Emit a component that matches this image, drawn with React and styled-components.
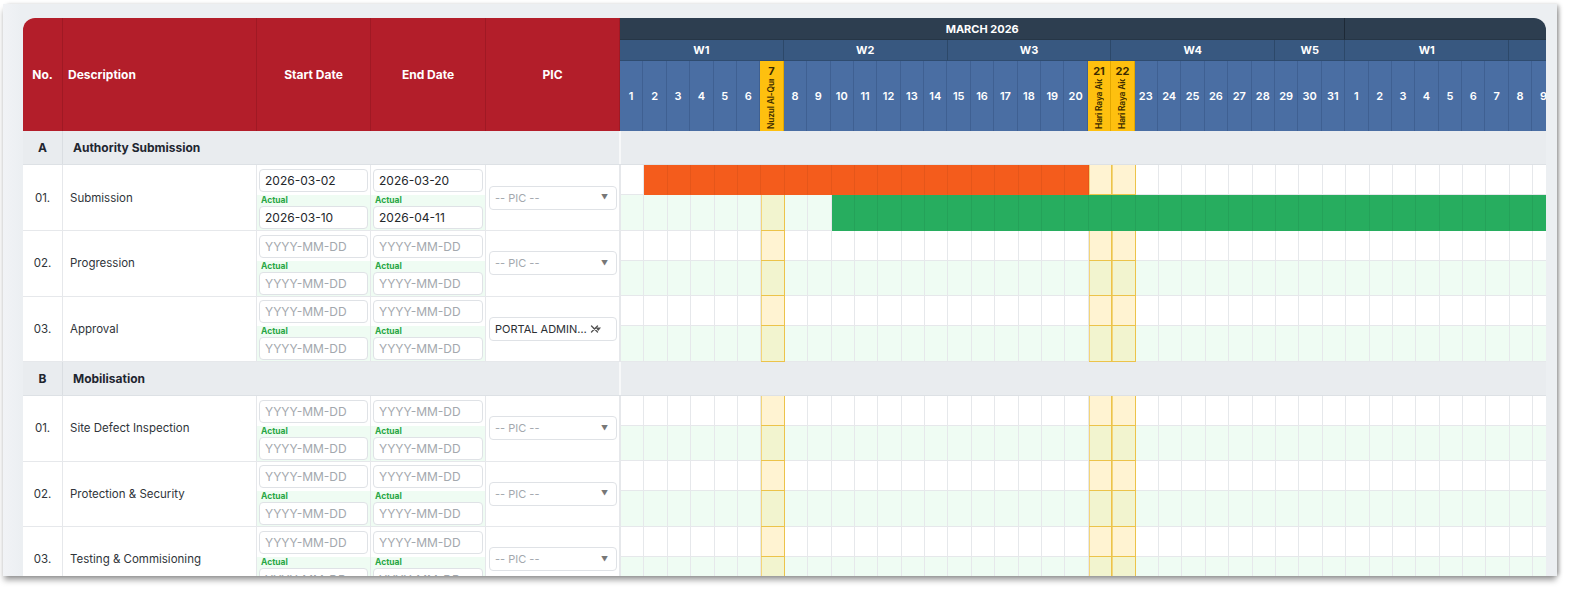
import React from 'react';
import styled, { createGlobalStyle, css } from 'styled-components';

const GlobalStyle = createGlobalStyle`
  html, body { margin: 0; padding: 0; background: #ffffff; }
  body { font-family: Inter, "Noto Sans", sans-serif; color: #2b2f33; }
  * { box-sizing: border-box; }
`;

const DAY_W = 23.4;
const COLS = '40px 194px 114px 115px 134px 1fr';

const HOLIDAYS = {
  '3-7': 'Nuzul Al-Quran',
  '3-21': 'Hari Raya Aidilfitri',
  '3-22': 'Hari Raya Aidilfitri',
};

const MONTHS = [
  { m: 3, name: 'MARCH 2026', days: 31 },
  { m: 4, name: 'APRIL 2026', days: 30 },
];

const DAYS = [];
MONTHS.forEach((mo) => {
  for (let d = 1; d <= mo.days; d++) {
    DAYS.push({ m: mo.m, d, holiday: HOLIDAYS[`${mo.m}-${d}`] });
  }
});

const weeksOf = (days) => {
  const out = [];
  for (let s = 1, w = 1; s <= days; s += 7, w++) {
    out.push({ label: `W${w}`, count: Math.min(7, days - s + 1) });
  }
  return out;
};

const idx = (m, d) => (m === 3 ? d - 1 : 31 + d - 1);

const SECTIONS = [
  {
    key: 'A',
    title: 'Authority Submission',
    tasks: [
      {
        no: '01.', name: 'Submission',
        plan: ['2026-03-02', '2026-03-20'], actual: ['2026-03-10', '2026-04-11'],
        planRange: [idx(3, 2), idx(3, 20)], actualRange: [idx(3, 10), idx(4, 11)],
      },
      { no: '02.', name: 'Progression' },
      { no: '03.', name: 'Approval', pic: 'PORTAL ADMINISTRATOR' },
    ],
  },
  {
    key: 'B',
    title: 'Mobilisation',
    tasks: [
      { no: '01.', name: 'Site Defect Inspection' },
      { no: '02.', name: 'Protection & Security' },
      { no: '03.', name: 'Testing & Commisioning' },
    ],
  },
];

/* ---------- frame ---------- */
const Page = styled.div`
  padding: 4px 15px 14px 3px;
`;

const Card = styled.div`
  height: 572px;
  background: linear-gradient(90deg, #f1f3f6 0px, #eceff2 18px);
  padding: 14px 11px 0 20px;
  overflow: hidden;
  box-shadow: 0 5px 6px -1px rgba(0, 0, 0, 0.38), 3px 0 4px -1px rgba(0, 0, 0, 0.3);
`;

const Sheet = styled.div`
  height: 100%;
  background: #fff;
  border-radius: 12px 12px 0 0;
  overflow: hidden;
`;

/* ---------- header ---------- */
const HeaderGrid = styled.div`
  display: grid;
  grid-template-columns: ${COLS};
  height: 113px;
`;

const HeadCell = styled.div`
  background: #b31e2a;
  color: #fff;
  font-weight: 700;
  font-size: 12px;
  display: flex;
  align-items: center;
  justify-content: ${(p) => (p.$left ? 'flex-start' : 'center')};
  padding-left: ${(p) => (p.$left ? '5px' : '0')};
  border-right: 1px solid #a01924;
`;

const Timeline = styled.div`
  overflow: hidden;
  display: flex;
  flex-direction: column;
  min-width: 0;
`;

const Band = styled.div`
  display: flex;
  flex-shrink: 0;
  height: ${(p) => p.$h}px;
`;

const MonthCell = styled.div`
  flex-shrink: 0;
  background: #2d3e50;
  color: #fff;
  font-size: 11px;
  font-weight: 700;
  display: flex;
  align-items: center;
  justify-content: center;
  border-right: 1px solid #1d2936;
  border-bottom: 1px solid #263646;
`;

const WeekCell = styled.div`
  flex-shrink: 0;
  background: #385880;
  color: #fff;
  font-size: 11px;
  font-weight: 700;
  display: flex;
  align-items: center;
  justify-content: center;
  border-right: 1px solid #2c4869;
  border-bottom: 1px solid #2f4c70;
`;

const DayHead = styled.div`
  flex-shrink: 0;
  width: ${DAY_W}px;
  background: #4a6ea3;
  color: #fff;
  font-size: 11px;
  font-weight: 600;
  display: flex;
  align-items: center;
  justify-content: center;
  border-right: 1px solid #3f6092;
  ${(p) =>
    p.$holiday &&
    css`
      background: #fec00f;
      color: #3a2a00;
      flex-direction: column;
      justify-content: flex-start;
      padding-top: 4px;
      border-right: 1px solid #e3a800;
    `}
`;

const HolidayNum = styled.div`
  font-size: 11px;
  font-weight: 700;
  line-height: 13px;
`;

const HolidayName = styled.div`
  writing-mode: vertical-rl;
  transform: rotate(180deg);
  height: 50px;
  margin-top: 1px;
  overflow: hidden;
  white-space: nowrap;
  font-size: 8.5px;
  font-weight: 600;
  letter-spacing: -0.2px;
  line-height: 11px;
`;

/* ---------- body ---------- */
const SectionRow = styled.div`
  display: grid;
  grid-template-columns: ${COLS};
  height: 34px;
  background: #e9ecef;
  border-bottom: 1px solid #dde1e5;
`;

const SectionKey = styled.div`
  display: flex;
  align-items: center;
  justify-content: center;
  font-size: 12px;
  font-weight: 700;
  color: #1f2630;
  border-right: 1px solid #dadee2;
`;

const SectionTitle = styled.div`
  grid-column: 2 / 6;
  display: flex;
  align-items: center;
  padding-left: 10px;
  font-size: 12px;
  font-weight: 700;
  color: #1f2630;
  border-right: 1px solid #f7f8f9;
`;

const TaskRow = styled.div`
  display: grid;
  grid-template-columns: ${COLS};
  height: 65.5px;
`;

const BodyCell = styled.div`
  border-right: 1px solid #e6e8eb;
  border-bottom: 1px solid #e6e8eb;
  display: flex;
  align-items: center;
  font-size: 11.5px;
  color: #30353a;
  justify-content: ${(p) => (p.$center ? 'center' : 'flex-start')};
  padding-left: ${(p) => (p.$center ? '0' : '7px')};
`;

const DateCell = styled.div`
  display: flex;
  flex-direction: column;
  border-right: 1px solid #e6e8eb;
  border-bottom: 1px solid #e6e8eb;
`;

const PlanPart = styled.div`
  height: 30px;
  padding: 4px 2px 0 2px;
`;

const ActualPart = styled.div`
  flex: 1;
  background: #effcf3;
  padding: 0 2px 1px 2px;
  display: flex;
  flex-direction: column;
`;

const ActualLabel = styled.div`
  font-size: 8.5px;
  font-weight: 700;
  color: #28a745;
  line-height: 11px;
  padding-left: 2px;
`;

const DateBox = styled.div`
  height: 23px;
  background: #fff;
  border: 1px solid #dfe2e6;
  border-radius: 4px;
  display: flex;
  align-items: center;
  padding-left: 5px;
  font-size: 12px;
  color: ${(p) => (p.$empty ? '#a3a8ae' : '#23272b')};
`;

const PicCell = styled.div`
  display: flex;
  align-items: center;
  padding: 0 2px 0 3px;
  border-right: 1px solid #e6e8eb;
  border-bottom: 1px solid #e6e8eb;
`;

const Select = styled.div`
  width: 100%;
  height: 24px;
  border: 1px solid #dfe2e6;
  border-radius: 4px;
  background: #fff;
  display: flex;
  align-items: center;
  padding: 0 ${(p) => (p.$empty ? '8px' : '28px')} 0 5px;
  font-size: 11px;
  color: ${(p) => (p.$empty ? '#a3a8ae' : '#2b2f33')};
`;

const SelectText = styled.span`
  flex: 1;
  min-width: 0;
  white-space: nowrap;
  overflow: hidden;
  text-overflow: ellipsis;
`;

const Caret = styled.span`
  font-size: 7px;
  color: #777;
  margin-left: 4px;
`;

const Gantt = styled.div`
  min-width: 0;
  overflow: hidden;
  display: flex;
  flex-direction: column;
  border-left: 1px solid #e6e8eb;
`;

const SectionGantt = styled.div`
  border-left: 1px solid #f7f8f9;
`;

const Lane = styled.div`
  display: flex;
  height: ${(p) => p.$h}px;
  flex-shrink: 0;
`;

const DayCell = styled.div`
  flex-shrink: 0;
  width: ${DAY_W}px;
  height: 100%;
  background: ${(p) => (p.$actual ? '#effcf3' : '#fff')};
  border-right: 1px solid #e6e8eb;
  border-bottom: 1px solid #e6e8eb;
  ${(p) =>
    p.$holiday &&
    css`
      background: ${p.$actual ? '#f2f4cf' : '#fff3d2'};
      border-right: 1px solid #ecc34a;
      border-bottom: 1px solid #ecc34a;
      box-shadow: inset 1px 0 0 #f3d57a;
    `}
  ${(p) =>
    p.$bar &&
    css`
      background: ${p.$bar};
      border-right: 1px solid rgba(0, 0, 0, 0.06);
      border-bottom: 1px solid ${p.$bar};
      box-shadow: none;
    `}
`;

const ClearIcon = () => (
  <svg width="12" height="10" viewBox="0 0 12 10" style={{ marginLeft: 3, marginRight: -14, flexShrink: 0 }}>
    <path d="M1.5 2 L7.5 8 M7.5 2 L1.5 8" stroke="#555" strokeWidth="1.4" strokeLinecap="round" />
    <path d="M5.5 3.5 L11 3.5 L8.25 7 Z" fill="#555" />
  </svg>
);

const inRange = (i, r) => r && i >= r[0] && i <= r[1];

const LaneCells = ({ actual, range, color }) =>
  DAYS.map((day, i) => (
    <DayCell
      key={i}
      $actual={actual}
      $holiday={!!day.holiday}
      $bar={inRange(i, range) ? color : undefined}
    />
  ));

const DateField = ({ value }) => (
  <DateBox $empty={!value}>{value || 'YYYY-MM-DD'}</DateBox>
);

const DateColumn = ({ plan, actual }) => (
  <DateCell>
    <PlanPart>
      <DateField value={plan} />
    </PlanPart>
    <ActualPart>
      <ActualLabel>Actual</ActualLabel>
      <DateField value={actual} />
    </ActualPart>
  </DateCell>
);

const Task = ({ task }) => (
  <TaskRow>
    <BodyCell $center>{task.no}</BodyCell>
    <BodyCell>{task.name}</BodyCell>
    <DateColumn plan={task.plan?.[0]} actual={task.actual?.[0]} />
    <DateColumn plan={task.plan?.[1]} actual={task.actual?.[1]} />
    <PicCell>
      <Select $empty={!task.pic}>
        <SelectText>{task.pic || '-- PIC --'}</SelectText>
        {task.pic ? <ClearIcon /> : <Caret>▼</Caret>}
      </Select>
    </PicCell>
    <Gantt>
      <Lane $h={30}>
        <LaneCells range={task.planRange} color="#f45c1c" />
      </Lane>
      <Lane $h={35.5}>
        <LaneCells actual range={task.actualRange} color="#27ad5f" />
      </Lane>
    </Gantt>
  </TaskRow>
);

export default function App() {
  return (
    <>
      <GlobalStyle />
      <Page>
        <Card>
          <Sheet>
            <HeaderGrid>
              <HeadCell>No.</HeadCell>
              <HeadCell $left>Description</HeadCell>
              <HeadCell>Start Date</HeadCell>
              <HeadCell>End Date</HeadCell>
              <HeadCell>PIC</HeadCell>
              <Timeline>
                <Band $h={22}>
                  {MONTHS.map((mo) => (
                    <MonthCell key={mo.m} style={{ width: mo.days * DAY_W }}>
                      {mo.name}
                    </MonthCell>
                  ))}
                </Band>
                <Band $h={21}>
                  {MONTHS.flatMap((mo) =>
                    weeksOf(mo.days).map((w) => (
                      <WeekCell key={`${mo.m}-${w.label}`} style={{ width: w.count * DAY_W }}>
                        {w.label}
                      </WeekCell>
                    ))
                  )}
                </Band>
                <Band $h={70}>
                  {DAYS.map((day, i) => (
                    <DayHead key={i} $holiday={!!day.holiday}>
                      {day.holiday ? (
                        <>
                          <HolidayNum>{day.d}</HolidayNum>
                          <HolidayName>{day.holiday}</HolidayName>
                        </>
                      ) : (
                        day.d
                      )}
                    </DayHead>
                  ))}
                </Band>
              </Timeline>
            </HeaderGrid>

            {SECTIONS.map((sec) => (
              <React.Fragment key={sec.key}>
                <SectionRow>
                  <SectionKey>{sec.key}</SectionKey>
                  <SectionTitle>{sec.title}</SectionTitle>
                  <SectionGantt />
                </SectionRow>
                {sec.tasks.map((t) => (
                  <Task key={sec.key + t.no} task={t} />
                ))}
              </React.Fragment>
            ))}
          </Sheet>
        </Card>
      </Page>
    </>
  );
}
